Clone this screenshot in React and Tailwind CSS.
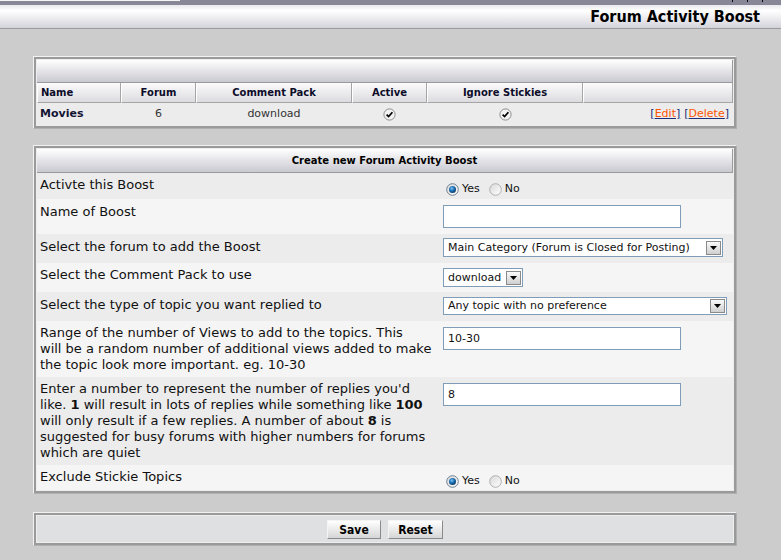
import React from 'react';

const sans = "font-['DejaVu_Sans','Verdana',sans-serif]";
const cond = "font-['DejaVu_Sans_Condensed','DejaVu_Sans',sans-serif]";

function Radio({ on }) {
  return (
    <svg width="13" height="13" viewBox="0 0 13 13" className="shrink-0">
      <defs>
        <linearGradient id="rOff" x1="0" y1="0" x2="1" y2="1">
          <stop offset="0" stopColor="#d8d8d8" />
          <stop offset="1" stopColor="#ffffff" />
        </linearGradient>
        <radialGradient id="rDot" cx="0.4" cy="0.35" r="0.7">
          <stop offset="0" stopColor="#7cc4f5" />
          <stop offset="0.5" stopColor="#1a6fb4" />
          <stop offset="1" stopColor="#0a355e" />
        </radialGradient>
      </defs>
      <circle cx="6.5" cy="6.5" r="5.8" fill="url(#rOff)" stroke={on ? '#6f7f8f' : '#b0b0b0'} strokeWidth="1" />
      {on && <circle cx="6.5" cy="6.5" r="3.5" fill="url(#rDot)" />}
    </svg>
  );
}

function YesNo() {
  return (
    <div className={`flex items-center text-[11px] text-[#111] ${sans}`}>
      <Radio on />
      <span className="ml-[3px]">Yes</span>
      <span className="ml-[9px]"><Radio /></span>
      <span className="ml-[3px]">No</span>
    </div>
  );
}

function Check() {
  return (
    <svg width="13" height="13" viewBox="0 0 13 13">
      <circle cx="6.5" cy="6.5" r="5.6" fill="#f2f2f2" stroke="#8c8c8c" strokeWidth="1" />
      <path d="M3.6 6.6 L5.6 8.6 L9.4 4.2" fill="none" stroke="#000" strokeWidth="1.7" />
    </svg>
  );
}

function Select({ w, text, h = 'h-[19px]' }) {
  return (
    <div className={`${w} ${h} flex items-center border border-[#7f9db9] bg-white ${sans} text-[11px] text-[#111]`}>
      <span className="flex-1 pl-[4px] whitespace-nowrap overflow-hidden">{text}</span>
      <div className="mr-px w-[15px] h-[14px] flex items-center justify-center border border-[#8a8a8a] bg-linear-to-b from-[#fafafa] to-[#cfcfcf]">
        <svg width="7" height="4" viewBox="0 0 7 4"><path d="M0 0 H7 L3.5 4 Z" fill="#000" /></svg>
      </div>
    </div>
  );
}

function Input({ value }) {
  return (
    <div className={`w-[238px] h-[23px] border border-[#7f9db9] bg-white flex items-center pl-[4px] ${sans} text-[11px] text-[#111]`}>
      {value}
    </div>
  );
}

function Frame({ children, className = '' }) {
  return (
    <div className="mx-[33px] w-[704px] border border-t-[#f2f2f2] border-l-[#f2f2f2] border-r-[#b0b0b0] border-b-[#b0b0b0]">
      <div className="border-2 border-[#9a9a9a]">
        <div className={`border border-[#eeeeee] ${className}`}>{children}</div>
      </div>
    </div>
  );
}

const cols = [
  { w: 'w-[84px]', label: 'Name', cls: 'justify-start pl-[3px]' },
  { w: 'w-[75px]', label: 'Forum', cls: 'justify-center' },
  { w: 'w-[156px]', label: 'Comment Pack', cls: 'justify-center' },
  { w: 'w-[75px]', label: 'Active', cls: 'justify-center' },
  { w: 'w-[156px]', label: 'Ignore Stickies', cls: 'justify-center' },
  { w: 'flex-1', label: '', cls: '' },
];

const dark = 'bg-[#ececec]';
const light = 'bg-[#f5f5f5]';

export default function App() {
  return (
    <div className={`w-[781px] h-[560px] overflow-hidden bg-[#cccccc] ${sans}`}>
      <div className="h-[5px] bg-[#878797] flex">
        <div className="w-[180px] h-px bg-[#f4f4f4]" />
        <div className="flex-1" />
        <div className="flex gap-[14px] mr-[18px]">
          <div className="w-px h-[2px] bg-black" />
          <div className="w-px h-[2px] bg-black" />
          <div className="w-px h-[2px] bg-black" />
        </div>
      </div>
      <div className="h-[24px] border-b border-[#9b9b9b] bg-linear-to-b from-[#e9e9ee] via-white via-25% to-[#d3d3db] flex items-end justify-end pr-[21px] pb-[1px]">
        <span className={`${cond} font-bold text-[16px] leading-[20px] text-black`}>Forum Activity Boost</span>
      </div>

      <div className="h-[27px]" />
      <Frame>
        <div className="h-[23px] border-b border-r border-[#9a9a9a] bg-linear-to-b from-white to-[#c9c9d1]" />
        <div className="flex h-[20px] bg-[#f0f0f0]">
          {cols.map((c, i) => (
            <div key={i} className={`${c.w} flex items-center border-b border-r border-[#a5a5a5] border-l border-l-white bg-linear-to-b from-[#fbfbfb] to-[#dcdce0] ${c.cls} text-[10px] font-bold text-[#0c0c2a]`}>
              {c.label}
            </div>
          ))}
        </div>
        <div className={`flex h-[22px] items-center ${dark} text-[11px] text-[#333]`}>
          <div className="w-[84px] pl-[3px] font-bold text-[#141434]">Movies</div>
          <div className="w-[75px] text-center">6</div>
          <div className="w-[156px] text-center">download</div>
          <div className="w-[75px] flex justify-center"><Check /></div>
          <div className="w-[156px] flex justify-center"><Check /></div>
          <div className="flex-1 flex justify-end pr-[4px] gap-[4px]">
            <span className="underline decoration-[#1a2f7a] text-[#1a2f7a]">[<span className="text-[#ff5500]">Edit</span>]</span>
            <span className="underline decoration-[#1a2f7a] text-[#1a2f7a]">[<span className="text-[#ff5500]">Delete</span>]</span>
          </div>
        </div>
      </Frame>

      <div className="h-[16px]" />
      <Frame>
        <div className="h-[24px] border-b border-r border-[#9a9a9a] bg-linear-to-b from-white to-[#c9c9d1] flex items-center justify-center text-[10px] font-bold text-black">
          Create new Forum Activity Boost
        </div>
        <div className="text-[13px] leading-[16px] text-[#111]">
          <div className={`flex h-[26px] ${dark}`}>
            <div className="w-[403px] pl-[3px] pt-[4px]">Activte this Boost</div>
            <div className="flex-1 pl-[6px] pt-[8px]"><YesNo /></div>
          </div>
          <div className={`flex h-[35px] ${light}`}>
            <div className="w-[403px] pl-[3px] pt-[5px]">Name of Boost</div>
            <div className="flex-1 pl-[3px] pt-[6px]"><Input value="" /></div>
          </div>
          <div className={`flex h-[29px] ${dark}`}>
            <div className="w-[403px] pl-[3px] pt-[5px]">Select the forum to add the Boost</div>
            <div className="flex-1 pl-[3px] pt-[4px]"><Select w="w-[280px]" text="Main Category (Forum is Closed for Posting)" /></div>
          </div>
          <div className={`flex h-[29px] ${light}`}>
            <div className="w-[403px] pl-[3px] pt-[4px]">Select the Comment Pack to use</div>
            <div className="flex-1 pl-[3px] pt-[5px]"><Select w="w-[80px]" text="download" /></div>
          </div>
          <div className={`flex h-[29px] ${dark}`}>
            <div className="w-[403px] pl-[3px] pt-[5px]">Select the type of topic you want replied to</div>
            <div className="flex-1 pl-[3px] pt-[5px]"><Select w="w-[284px]" h="h-[18px]" text="Any topic with no preference" /></div>
          </div>
          <div className={`flex h-[56px] ${light}`}>
            <div className="w-[403px] pl-[3px] pt-[4px] whitespace-nowrap">
              Range of the number of Views to add to the topics. This<br />
              will be a random number of additional views added to make<br />
              the topic look more important. eg. 10-30
            </div>
            <div className="flex-1 pl-[3px] pt-[6px]"><Input value="10-30" /></div>
          </div>
          <div className={`flex h-[88px] ${dark}`}>
            <div className="w-[403px] pl-[3px] pt-[4px] whitespace-nowrap">
              Enter a number to represent the number of replies you'd<br />
              like. <b>1</b> will result in lots of replies while something like <b>100</b><br />
              will only result if a few replies. A number of about <b>8</b> is<br />
              suggested for busy forums with higher numbers for forums<br />
              which are quiet
            </div>
            <div className="flex-1 pl-[3px] pt-[6px]"><Input value="8" /></div>
          </div>
          <div className={`flex h-[25px] ${light}`}>
            <div className="w-[403px] pl-[3px] pt-[4px]">Exclude Stickie Topics</div>
            <div className="flex-1 pl-[6px] pt-[8px]"><YesNo /></div>
          </div>
        </div>
      </Frame>

      <div className="h-[18px]" />
      <Frame className="bg-[#dfe0e2] h-[28px] flex items-start justify-center pt-[4px] gap-[7px]">
        <button className={`w-[54px] h-[19px] border border-t-[#f4f4f4] border-l-[#f4f4f4] border-r-[#8a8a8a] border-b-[#8a8a8a] bg-linear-to-b from-white to-[#d6d6d6] ${cond} font-bold text-[12px] text-black leading-none`}>Save</button>
        <button className={`w-[55px] h-[19px] border border-t-[#f4f4f4] border-l-[#f4f4f4] border-r-[#8a8a8a] border-b-[#8a8a8a] bg-linear-to-b from-white to-[#d6d6d6] ${cond} font-bold text-[12px] text-black leading-none`}>Reset</button>
      </Frame>
    </div>
  );
}
